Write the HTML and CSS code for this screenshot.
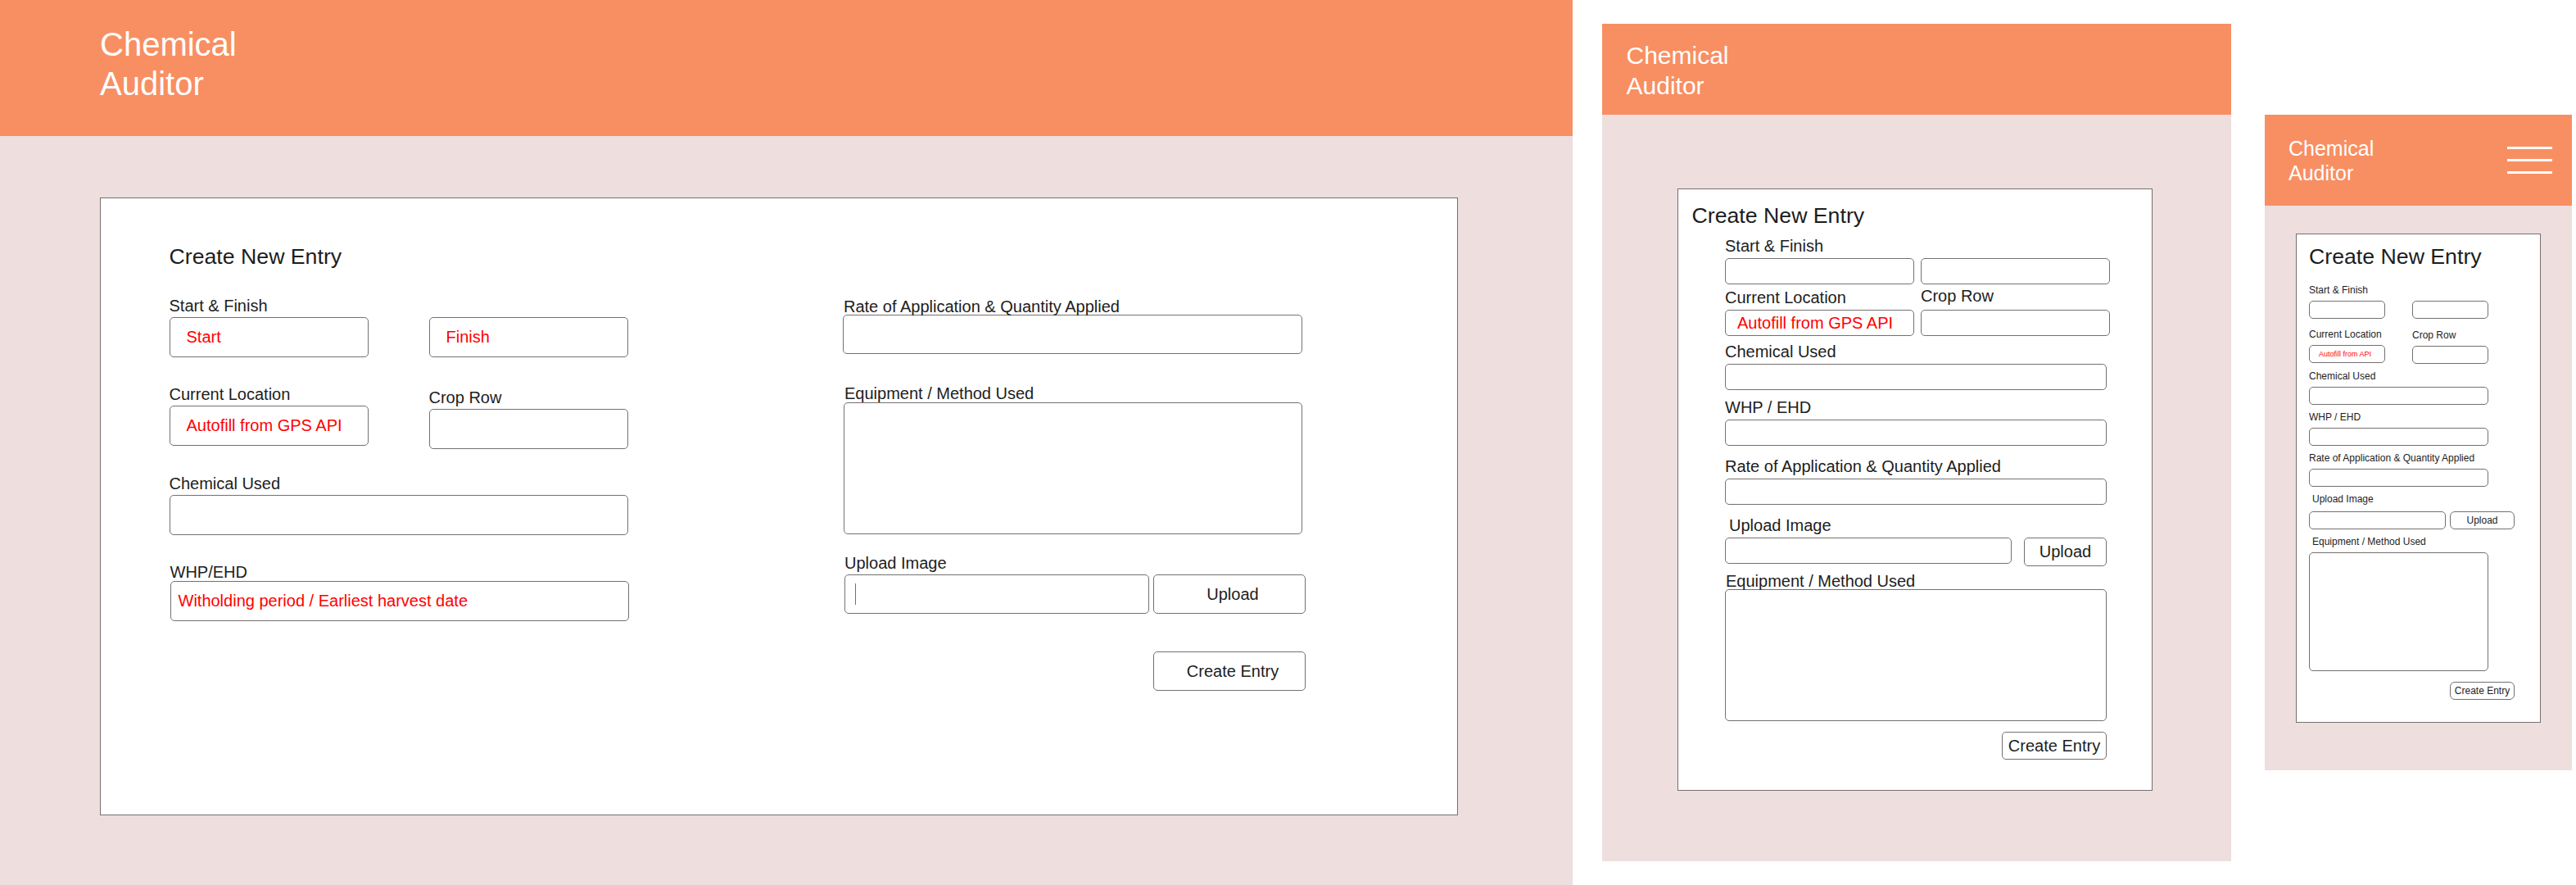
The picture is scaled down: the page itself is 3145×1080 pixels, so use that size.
FILE: index.html
```html
<!DOCTYPE html>
<html>
<head>
  <title>Chemical Auditor</title>
  <link rel="stylesheet" href="styles.css">
</head>
<body>
  <!-- desktop -->
  <section class="frame desktop">
    <header class="topbar"><div class="brand">Chemical<br>Auditor</div></header>
    <div class="card">
      <h1 class="title">Create New Entry</h1>
      <div class="columns">
        <div class="col-left">
          <div class="row r-times">
            <div class="field half"><div class="label">Start &amp; Finish</div><div class="box hint">Start</div></div>
            <div class="field half"><div class="label label-blank"></div><div class="box hint">Finish</div></div>
          </div>
          <div class="row r-location">
            <div class="field half"><div class="label">Current Location</div><div class="box hint">Autofill from GPS API</div></div>
            <div class="field half f-crop"><div class="label">Crop Row</div><div class="box"></div></div>
          </div>
          <div class="field r-chemical"><div class="label">Chemical Used</div><div class="box"></div></div>
          <div class="field r-whp"><div class="label">WHP/EHD</div><div class="box hint">Witholding period / Earliest harvest date</div></div>
        </div>
        <div class="col-right">
          <div class="field r-rate"><div class="label">Rate of Application &amp; Quantity Applied</div><div class="box"></div></div>
          <div class="field r-equipment"><div class="label">Equipment / Method Used</div><div class="box area"></div></div>
          <div class="field r-upload">
            <div class="label">Upload Image</div>
            <div class="upload-row"><div class="box file"><span class="caret"></span></div><button class="btn">Upload</button></div>
          </div>
          <div class="actions"><button class="btn">Create Entry</button></div>
        </div>
      </div>
    </div>
  </section>

  <!-- tablet -->
  <section class="frame tablet">
    <header class="topbar"><div class="brand">Chemical<br>Auditor</div></header>
    <div class="card">
      <h1 class="title">Create New Entry</h1>
      <div class="form">
        <div class="row r-times">
          <div class="field half"><div class="label">Start &amp; Finish</div><div class="box"></div></div>
          <div class="field half"><div class="label label-blank"></div><div class="box"></div></div>
        </div>
        <div class="row r-location">
          <div class="field half"><div class="label">Current Location</div><div class="box hint">Autofill from GPS API</div></div>
          <div class="field half f-crop"><div class="label">Crop Row</div><div class="box"></div></div>
        </div>
        <div class="field r-chemical"><div class="label">Chemical Used</div><div class="box"></div></div>
        <div class="field r-whp"><div class="label">WHP / EHD</div><div class="box"></div></div>
        <div class="field r-rate"><div class="label">Rate of Application &amp; Quantity Applied</div><div class="box"></div></div>
        <div class="field r-upload">
          <div class="label">Upload Image</div>
          <div class="upload-row"><div class="box file"></div><button class="btn">Upload</button></div>
        </div>
        <div class="field r-equipment"><div class="label">Equipment / Method Used</div><div class="box area"></div></div>
        <div class="actions"><button class="btn">Create Entry</button></div>
      </div>
    </div>
  </section>

  <!-- phone -->
  <section class="frame phone">
    <header class="topbar">
      <div class="brand">Chemical<br>Auditor</div>
      <div class="burger"><span></span><span></span><span></span></div>
    </header>
    <div class="card">
      <h1 class="title">Create New Entry</h1>
      <div class="form">
        <div class="row r-times">
          <div class="field half"><div class="label">Start &amp; Finish</div><div class="box"></div></div>
          <div class="field half"><div class="label label-blank"></div><div class="box"></div></div>
        </div>
        <div class="row r-location">
          <div class="field half"><div class="label">Current Location</div><div class="box hint">Autofill from API</div></div>
          <div class="field half f-crop"><div class="label">Crop Row</div><div class="box"></div></div>
        </div>
        <div class="field r-chemical"><div class="label">Chemical Used</div><div class="box"></div></div>
        <div class="field r-whp"><div class="label">WHP / EHD</div><div class="box"></div></div>
        <div class="field r-rate"><div class="label">Rate of Application &amp; Quantity Applied</div><div class="box"></div></div>
        <div class="field r-upload">
          <div class="label">Upload Image</div>
          <div class="upload-row"><div class="box file"></div><button class="btn">Upload</button></div>
        </div>
        <div class="field r-equipment"><div class="label">Equipment / Method Used</div><div class="box area"></div></div>
        <div class="actions"><button class="btn">Create Entry</button></div>
      </div>
    </div>
  </section>
</body>
</html>
```
FILE: styles.css
```css
* {
  box-sizing: border-box;
}

body {
  margin: 0;
  background-color: #ffffff;
  color: #1d1d1d;
  font-family: "Liberation Sans", Arial, sans-serif;
  display: flex;
  align-items: flex-start;
}

.frame {
  flex: none;
  background-color: #eedede;
}

.topbar {
  background-color: #f88f62;
  color: #ffffff;
}

.card {
  background-color: #ffffff;
  border: 1px solid #767070;
}

.title {
  margin: 0;
  font-size: 26.7px;
  font-weight: normal;
  line-height: 32px;
}

.label {
  font-size: 20px;
  line-height: 24px;
  white-space: nowrap;
}

.label-blank {
  height: 24px;
}

.box {
  border: 1px solid #767070;
  border-radius: 5px;
  background-color: #ffffff;
  display: flex;
  align-items: center;
  font-size: 20px;
  white-space: nowrap;
}

.hint {
  color: #ff0000;
}

.btn {
  padding: 0;
  border: 1px solid #767070;
  border-radius: 5px;
  background-color: #ffffff;
  color: #1d1d1d;
  font-family: inherit;
  font-size: 20px;
  cursor: pointer;
}

.row {
  display: flex;
}

.upload-row {
  display: flex;
  align-items: flex-start;
}

.actions {
  display: flex;
}

/* desktop */

.desktop {
  width: 1920px;
  height: 1080px;
}

.desktop .topbar {
  height: 166px;
  padding: 30px 0 0 122px;
}

.desktop .brand {
  font-size: 40px;
  line-height: 48px;
}

.desktop .card {
  width: 1658px;
  height: 754px;
  margin: 75px 0 0 122px;
  padding: 55px 0 0 83.5px;
}

.desktop .columns {
  display: flex;
}

.desktop .col-left {
  width: 823.5px;
  flex: none;
}

.desktop .col-right {
  width: 570px;
  flex: none;
}

.desktop .box {
  width: 560px;
  height: 49px;
}

.desktop .half {
  width: 243px;
}

.desktop .half .box {
  width: 243px;
}

.desktop .half + .half {
  margin-left: 74px;
}

.desktop .hint {
  padding-left: 20px;
}

.desktop .label {
  margin-bottom: 2px;
}

.desktop .r-times {
  margin-top: 32px;
}

.desktop .r-location {
  margin-top: 33px;
}

.desktop .f-crop {
  margin-top: 4px;
}

.desktop .r-chemical {
  margin-top: 30px;
}

.desktop .r-whp {
  margin: 33px 0 0 1px;
}

.desktop .r-whp .label {
  margin-bottom: -1px;
}

.desktop .r-whp .box {
  height: 49px;
  padding-left: 9px;
}

.desktop .r-rate {
  margin-top: 33px;
  margin-left: -1px;
}

.desktop .r-rate .label {
  margin: 0 0 -2px 1px;
}

.desktop .r-rate .box {
  width: 561px;
  height: 48px;
}

.desktop .r-equipment {
  margin-top: 36px;
}

.desktop .r-equipment .label {
  margin: 0 0 -1px 1px;
}

.desktop .area {
  height: 161px;
}

.desktop .r-upload {
  margin: 23px 0 0 1px;
}

.desktop .upload-row {
  gap: 5px;
}

.desktop .file {
  width: 372px;
  height: 48px;
}

.desktop .caret {
  width: 1px;
  height: 26px;
  margin-left: 12px;
  background-color: #767070;
}

.desktop .btn {
  width: 186px;
  height: 48px;
  padding-left: 8px;
}

.desktop .actions {
  margin: 46px 0 0 378px;
}

/* tablet */

.tablet {
  width: 768px;
  height: 1022px;
  margin: 29px 0 0 36px;
}

.tablet .topbar {
  height: 111px;
  padding: 21px 0 0 29.5px;
}

.tablet .brand {
  font-size: 30px;
  line-height: 36.5px;
}

.tablet .card {
  width: 580.5px;
  height: 735px;
  margin: 90px 0 0 91.5px;
  padding: 16px 0 0 17px;
}

.tablet .form {
  margin-left: 40.5px;
  width: 470px;
}

.tablet .box {
  width: 466px;
  height: 32px;
}

.tablet .half {
  width: 231px;
}

.tablet .half .box {
  width: 231px;
}

.tablet .half + .half {
  margin-left: 8px;
}

.tablet .hint {
  padding-left: 14px;
}

.tablet .label {
  margin-bottom: 3px;
}

.tablet .r-times {
  margin-top: 9px;
}

.tablet .r-location {
  margin-top: 2px;
  align-items: flex-end;
}

.tablet .f-crop .label {
  margin-bottom: 5px;
}

.tablet .r-chemical {
  margin-top: 7px;
}

.tablet .r-whp {
  margin-top: 9px;
}

.tablet .r-rate {
  margin-top: 13px;
}

.tablet .r-upload {
  margin-top: 13px;
}

.tablet .r-upload .label {
  margin-left: 5px;
}

.tablet .upload-row {
  gap: 15px;
}

.tablet .file {
  width: 350px;
}

.tablet .btn {
  width: 101px;
  height: 35px;
}

.tablet .r-equipment {
  margin-top: 6px;
}

.tablet .r-equipment .label {
  margin: 0 0 -2px 1px;
}

.tablet .area {
  height: 161px;
}

.tablet .actions {
  margin: 13px 0 0 338px;
}

.tablet .actions .btn {
  width: 128px;
  height: 34px;
}

/* phone */

.phone {
  width: 375px;
  height: 800px;
  margin: 140px 0 0 41px;
}

.phone .topbar {
  height: 111px;
  padding: 26px 24px 0 29px;
  display: flex;
  justify-content: space-between;
}

.phone .brand {
  font-size: 25px;
  line-height: 30px;
}

.phone .burger {
  width: 55px;
  margin-top: 13px;
  display: flex;
  flex-direction: column;
  gap: 12px;
}

.phone .burger span {
  height: 3px;
  background-color: #ffffff;
}

.phone .card {
  width: 299px;
  height: 597px;
  margin: 34px 0 0 38px;
  padding: 11px 0 0 15px;
}

.phone .form {
  width: 270px;
}

.phone .label {
  font-size: 12px;
  line-height: 16px;
  margin-bottom: 5px;
}

.phone .label-blank {
  height: 16px;
}

.phone .box {
  width: 219px;
  height: 22px;
  font-size: 9px;
}

.phone .half {
  width: 92px;
}

.phone .half .box {
  width: 93px;
}

.phone .half + .half {
  margin-left: 34px;
}

.phone .hint {
  padding-left: 11px;
}

.phone .r-times {
  margin-top: 17px;
}

.phone .r-location {
  margin-top: 11px;
}

.phone .f-crop {
  margin-top: 1px;
}

.phone .r-chemical,
.phone .r-whp,
.phone .r-rate,
.phone .r-upload,
.phone .r-equipment {
  margin-top: 7px;
}

.phone .r-upload .label,
.phone .r-equipment .label {
  margin-left: 4px;
}

.phone .r-upload .label {
  margin-bottom: 7px;
}

.phone .upload-row {
  gap: 5px;
}

.phone .file {
  width: 167px;
}

.phone .btn {
  width: 79px;
  height: 22px;
  font-size: 12px;
  border-radius: 6px;
}

.phone .area {
  height: 145px;
}

.phone .actions {
  margin: 13px 0 0 172px;
}
```
